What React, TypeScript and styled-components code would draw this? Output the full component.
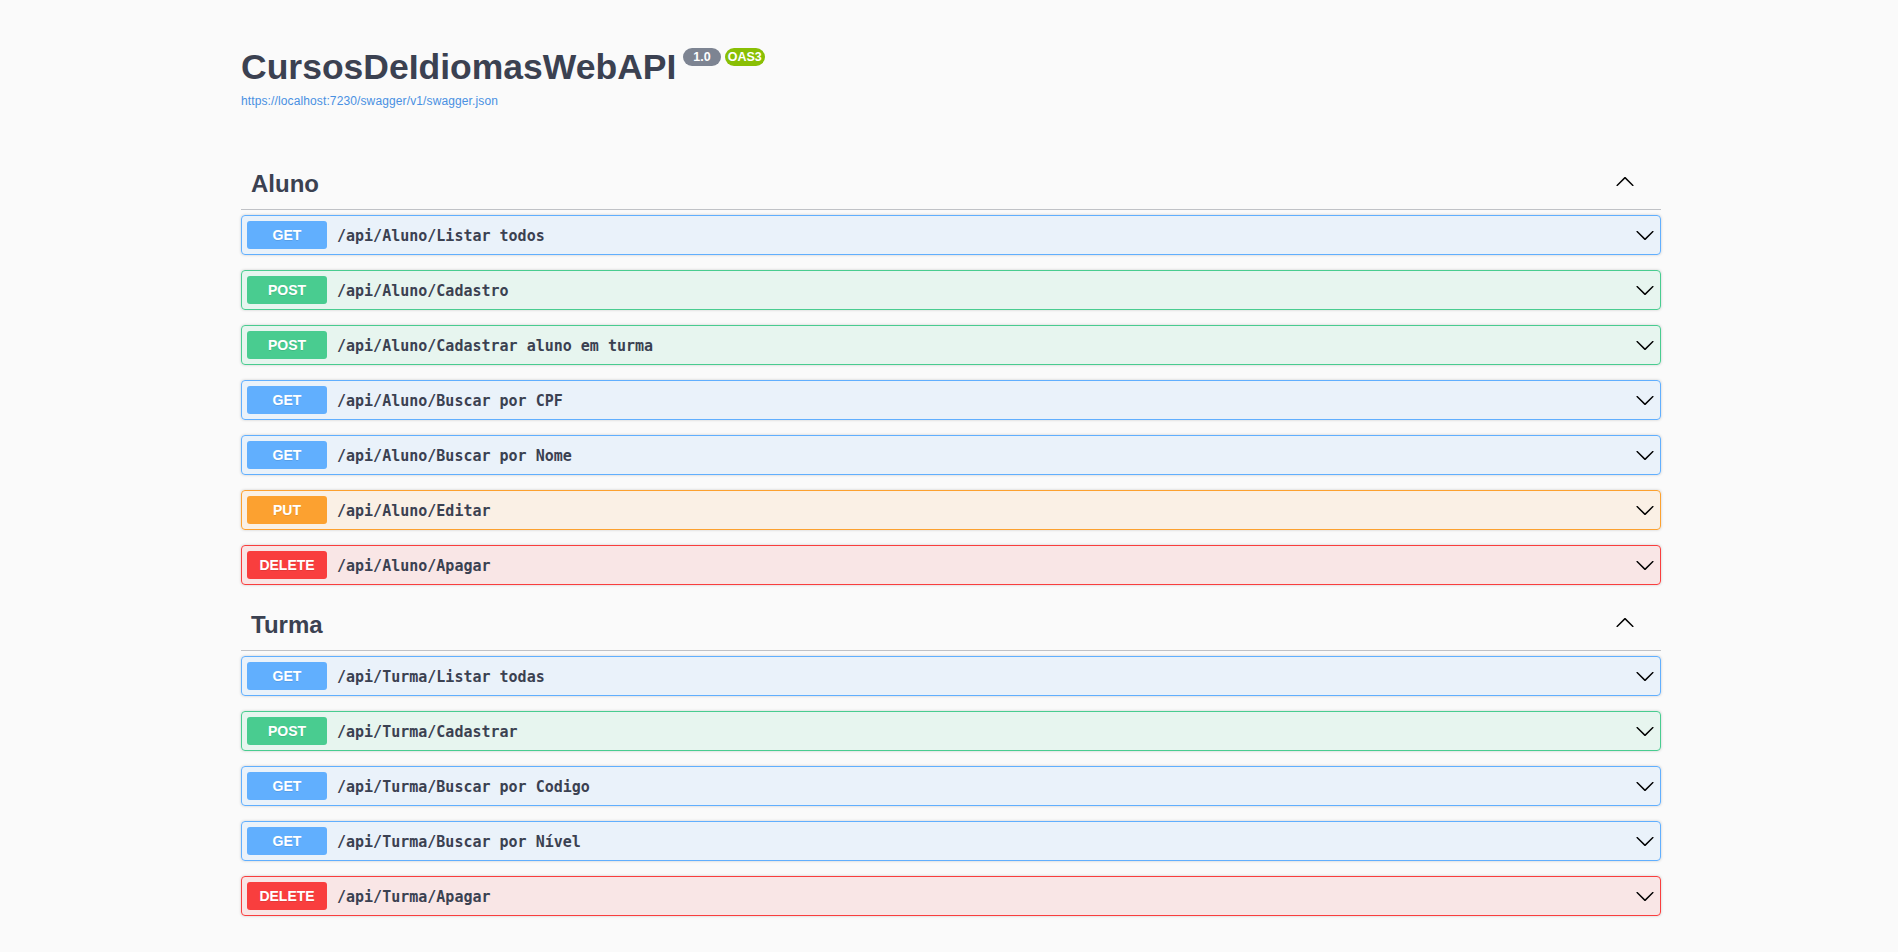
import React from "react";
import styled, { createGlobalStyle } from "styled-components";

const GlobalStyle = createGlobalStyle`
  html, body {
    margin: 0;
    padding: 0;
    background: #fafafa;
  }
  body {
    font-family: "Liberation Sans", Arial, sans-serif;
    color: #3b4151;
  }
  * { box-sizing: border-box; }
`;

type Method = "GET" | "POST" | "PUT" | "DELETE";

const METHOD_COLORS: Record<Method, { main: string; bg: string }> = {
  GET: { main: "#61affe", bg: "rgba(97,175,254,.1)" },
  POST: { main: "#49cc90", bg: "rgba(73,204,144,.1)" },
  PUT: { main: "#fca130", bg: "rgba(252,161,48,.1)" },
  DELETE: { main: "#f93e3e", bg: "rgba(249,62,62,.1)" },
};

const Page = styled.div`
  padding: 46px 0 20px 4px;
`;

const Wrapper = styled.div`
  width: 1420px;
  margin: 0 auto;
`;

const Info = styled.div`
  display: flex;
  flex-direction: column;
  align-items: flex-start;
`;

const TitleRow = styled.div`
  display: flex;
  align-items: flex-start;
  gap: 4px;
`;

const Title = styled.h2`
  margin: 1px 3px 0 0;
  font-family: "Liberation Sans", Arial, sans-serif;
  font-size: 35.5px;
  line-height: 40px;
  font-weight: 700;
  color: #3b4151;
`;

const Pill = styled.small<{ $bg: string; $pad: string }>`
  display: inline-block;
  margin-top: 2px;
  padding: ${(p) => p.$pad};
  border-radius: 57px;
  background: ${(p) => p.$bg};
  color: #fff;
  font-family: "Liberation Sans", Arial, sans-serif;
  font-size: 12.5px;
  line-height: 14px;
  font-weight: 700;
`;

const UrlLink = styled.a`
  margin-top: 7px;
  font-family: "Liberation Sans", Arial, sans-serif;
  font-size: 12px;
  line-height: 14px;
  letter-spacing: 0.12px;
  color: #4990e2;
  text-decoration: none;
`;

const Sections = styled.div`
  margin-top: 51px;
  display: flex;
  flex-direction: column;
`;

const TagSection = styled.section`
  display: flex;
  flex-direction: column;
`;

const TagHeading = styled.h3`
  display: flex;
  align-items: flex-start;
  margin: 0 0 5px;
  padding: 10px 20px 10px 10px;
  border-bottom: 1px solid rgba(59, 65, 81, 0.3);
  font-family: "Liberation Sans", Arial, sans-serif;
  font-size: 24px;
  line-height: 30px;
  font-weight: 700;
  color: #3b4151;
`;

const TagName = styled.span`
  flex: 1;
`;

const ExpandButton = styled.button`
  display: flex;
  border: none;
  background: none;
  padding: 0;
  margin: 2px 6px 0 0;
  color: #000;
  cursor: pointer;
`;

const OpBlock = styled.div<{ $method: Method }>`
  display: flex;
  align-items: center;
  height: 40px;
  margin: 0 0 15px;
  padding: 0 5px;
  border: 1px solid ${(p) => METHOD_COLORS[p.$method].main};
  border-radius: 4px;
  background: ${(p) => METHOD_COLORS[p.$method].bg};
  box-shadow: 0 0 3px rgba(0, 0, 0, 0.19);
`;

const MethodBadge = styled.span<{ $method: Method }>`
  min-width: 80px;
  padding: 6px 0;
  border-radius: 3px;
  background: ${(p) => METHOD_COLORS[p.$method].main};
  color: #fff;
  text-align: center;
  font-family: "Liberation Sans", Arial, sans-serif;
  font-size: 14px;
  line-height: 16px;
  font-weight: 700;
  text-shadow: 0 1px 0 rgba(0, 0, 0, 0.1);
`;

const PathText = styled.span`
  flex: 1;
  padding: 1px 10px 0;
  font-family: "DejaVu Sans Mono", "Liberation Mono", monospace;
  font-size: 15px;
  font-weight: 700;
  color: #3b4151;
  white-space: pre;
`;

const ArrowIcon = styled.svg`
  width: 20px;
  height: 20px;
  flex: none;
  fill: currentColor;
  color: #000;
`;

const ArrowUp = () => (
  <ArrowIcon viewBox="0 0 20 20" aria-hidden="true">
    <path d="M 17.418 14.908 C 17.69 15.176 18.127 15.176 18.397 14.908 C 18.667 14.64 18.668 14.207 18.397 13.939 L 10.489 6.109 C 10.219 5.841 9.782 5.841 9.51 6.109 L 1.602 13.939 C 1.332 14.207 1.332 14.64 1.602 14.908 C 1.873 15.176 2.311 15.176 2.581 14.908 L 10 7.767 L 17.418 14.908 Z" />
  </ArrowIcon>
);

const ArrowDown = () => (
  <ArrowIcon viewBox="0 0 20 20" aria-hidden="true">
    <path d="M17.418 6.109c.272-.268.709-.268.979 0s.271.701 0 .969l-7.908 7.83c-.27.268-.707.268-.979 0l-7.908-7.830c-.27-.268-.27-.701 0-.969.271-.268.709-.268.979 0L10 13.25l7.418-7.141z" />
  </ArrowIcon>
);

const sections: { name: string; ops: [Method, string][] }[] = [
  {
    name: "Aluno",
    ops: [
      ["GET", "/api/Aluno/Listar todos"],
      ["POST", "/api/Aluno/Cadastro"],
      ["POST", "/api/Aluno/Cadastrar aluno em turma"],
      ["GET", "/api/Aluno/Buscar por CPF"],
      ["GET", "/api/Aluno/Buscar por Nome"],
      ["PUT", "/api/Aluno/Editar"],
      ["DELETE", "/api/Aluno/Apagar"],
    ],
  },
  {
    name: "Turma",
    ops: [
      ["GET", "/api/Turma/Listar todas"],
      ["POST", "/api/Turma/Cadastrar"],
      ["GET", "/api/Turma/Buscar por Codigo"],
      ["GET", "/api/Turma/Buscar por Nível"],
      ["DELETE", "/api/Turma/Apagar"],
    ],
  },
];

export default function App() {
  return (
    <>
      <GlobalStyle />
      <Page>
        <Wrapper>
          <Info>
            <TitleRow>
              <Title>CursosDeIdiomasWebAPI</Title>
              <Pill $bg="#7d8492" $pad="2px 10px">1.0</Pill>
              <Pill $bg="#89bf04" $pad="2px 3px">OAS3</Pill>
            </TitleRow>
            <UrlLink href="#">https://localhost:7230/swagger/v1/swagger.json</UrlLink>
          </Info>
          <Sections>
            {sections.map((s) => (
              <TagSection key={s.name}>
                <TagHeading>
                  <TagName>{s.name}</TagName>
                  <ExpandButton aria-label="collapse">
                    <ArrowUp />
                  </ExpandButton>
                </TagHeading>
                {s.ops.map(([m, path]) => (
                  <OpBlock key={path} $method={m}>
                    <MethodBadge $method={m}>{m}</MethodBadge>
                    <PathText>{path}</PathText>
                    <ArrowDown />
                  </OpBlock>
                ))}
              </TagSection>
            ))}
          </Sections>
        </Wrapper>
      </Page>
    </>
  );
}
